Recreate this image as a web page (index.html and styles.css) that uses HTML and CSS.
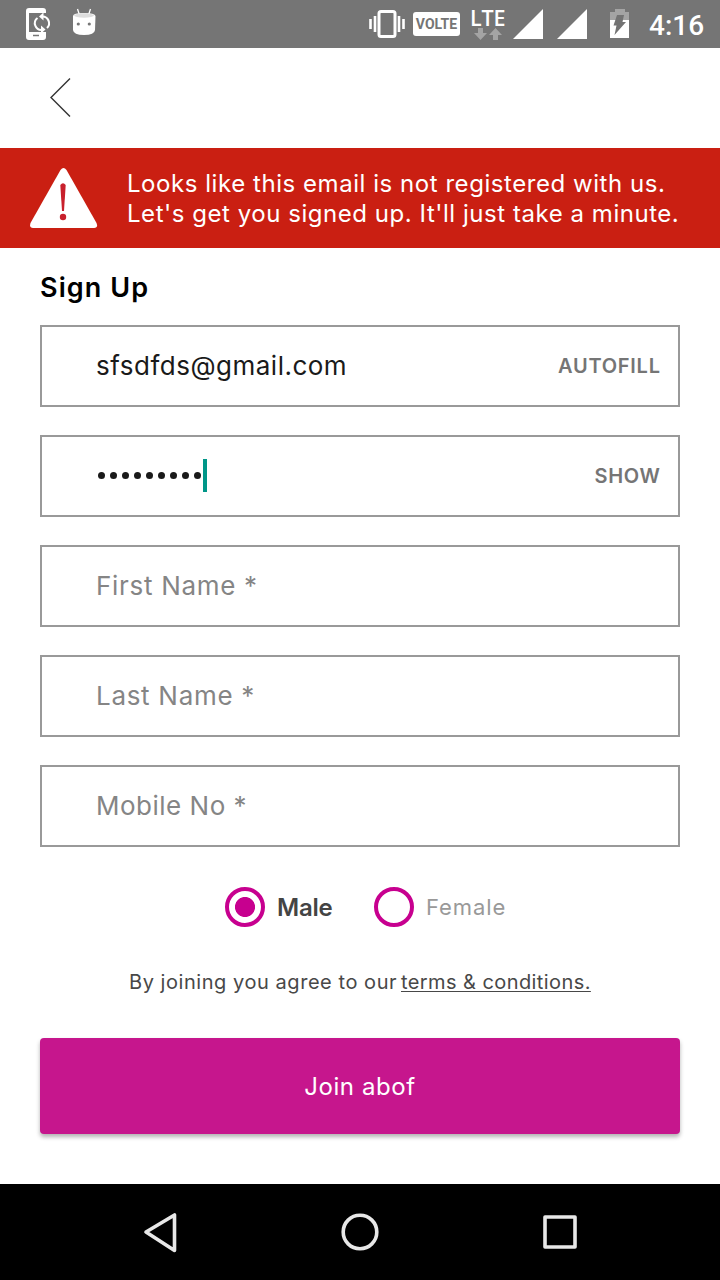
FILE: index.html
```html
<!DOCTYPE html>
<html lang="en">
<head>
<meta charset="utf-8">
<title>Sign Up</title>
<link rel="stylesheet" href="styles.css">
</head>
<body>
<div class="screen">
  <header class="status">
    <svg class="status-left" width="110" height="48" viewBox="0 0 110 48">
      <path d="M29 8h14q3 0 3 3v3h-3v-1H29v19h14v-1h3v6q0 3-3 3H29q-3 0-3-3V11q0-3 3-3z" fill="#fff"/>
      <path d="M29 13h18v19H29z" fill="#757575"/>
      <path d="M33 35.500h6" stroke="#777" stroke-width="1.500"/>
      <path d="M42 30A6.700 6.700 0 0 1 37.500 18M47 28A6.700 6.700 0 0 0 42 16.500" fill="none" stroke="#fff" stroke-width="2"/>
      <path d="M43.500 12.500v8l-4.500-4zM41 25.500v8l4.500-4z" fill="#fff"/>
      <path d="M77.500 9l2 6M90.500 9l-2 6" stroke="#fff" stroke-width="1.300"/>
      <path d="M73 16Q73 13 84 13T95.500 16L95 30Q94.500 35 84 35T73 30z" fill="#fff"/>
      <ellipse cx="84" cy="15.500" rx="10" ry="2.200" fill="#ddd"/>
      <circle cx="78.300" cy="24" r="1.600" fill="#777"/><circle cx="89.300" cy="24" r="1.600" fill="#777"/>
    </svg>
    <div class="status-right">
      <svg width="38" height="48" viewBox="368 0 38 48">
        <rect x="379" y="11.500" width="16" height="25" rx="2" fill="none" stroke="#fff" stroke-width="3"/>
        <path d="M370.500 19v10M403.500 19v10M375 16v16M399 16v16" stroke="#fff" stroke-width="2.600"/>
      </svg>
      <span class="volte">VOLTE</span>
      <div class="lte"><span class="lte-label">LTE</span>
        <svg width="30" height="12" viewBox="0 0 30 12"><path d="M5 0h5v5h4l-6.500 7L1 5h4zM20 12h5V7h4L22.500 0 16 7h4z" fill="#a4a4a4"/></svg>
      </div>
      <svg class="signals" width="122" height="48" viewBox="510 0 122 48">
        <path d="M513 39L543 9v30zM557 39L587 9v30z" fill="#fff"/>
        <path d="M610 12h5V9h10v3h4v8h-19z" fill="#a4a4a4"/>
        <path d="M610 20h19v18h-19z" fill="#fff"/>
        <path d="M617 15h7l-1.500 7h3.500L614.500 35l2-9.500h-3z" fill="#737373"/>
      </svg>
      <span class="clock">4:16</span>
    </div>
  </header>
  <nav class="toolbar">
    <svg width="24" height="42" viewBox="0 0 24 42"><path d="M22 1.500L3 20.500l19 19" fill="none" stroke="#333" stroke-width="1.400"/></svg>
  </nav>
  <section class="alert">
    <svg width="68" height="60" viewBox="0 0 68 60">
      <path d="M30.500 2Q33.500-2 36.500 2L66.500 55Q68.500 60 64 60H3Q-1 60 .5 55z" fill="#fff"/>
      <path d="M30.300 17Q33 13.500 35.700 17L34 43h-2z" fill="#c8202c"/><circle cx="33" cy="49" r="3.200" fill="#c8202c"/>
    </svg>
    <p class="alert-text"><span class="line-one">Looks like this email is not registered with us.</span><br><span class="line-two">Let's get you signed up. It'll just take a minute.</span></p>
  </section>
  <main class="form">
    <h1 class="title"><span>Sign Up</span></h1>
    <div class="fields">
      <div class="field"><span class="email">sfsdfds@gmail.com</span><span class="action autofill">AUTOFILL</span></div>
      <div class="field"><span class="password"><i></i><i></i><i></i><i></i><i></i><i></i><i></i><i></i><i></i></span><span class="caret"></span><span class="action show">SHOW</span></div>
      <div class="field"><span class="hint first">First Name *</span></div>
      <div class="field"><span class="hint last">Last Name *</span></div>
      <div class="field"><span class="hint mobile">Mobile No *</span></div>
    </div>
    <div class="genders">
      <span class="radio checked"></span><span class="male">Male</span>
      <span class="radio second"></span><span class="female">Female</span>
    </div>
    <p class="terms"><span class="agree">By joining you agree to our</span><a class="link">terms &amp; conditions.</a></p>
    <div class="join"><span>Join abof</span></div>
  </main>
  <footer class="navbar">
    <svg width="720" height="96" viewBox="0 0 720 96" fill="none" stroke="#e8e8e8" stroke-width="3.600" stroke-linejoin="round">
      <path d="M174.500 31v35.500L146 48z"/><circle cx="360" cy="48" r="16.800"/><rect x="545" y="33" width="30" height="30"/>
    </svg>
  </footer>
</div>
</body>
</html>
```
FILE: styles.css
```css
* { box-sizing: border-box; }
body { margin: 0; font-family: Inter, "Open Sans", sans-serif; }
svg { display: block; flex: none; }
span, a { white-space: nowrap; }
p, h1 { margin: 0; }
.screen { width: 720px; height: 1280px; display: flex; flex-direction: column; background: #fff; }
.status { height: 48px; background: #757575; display: flex; justify-content: space-between; color: #fff; flex: none; }
.status-right { width: 352px; display: flex; align-items: center; }
.volte { margin-left: 7px; width: 47px; height: 24px; border-radius: 3px; background: #fff; color: #757575; font: 700 14px/24px Roboto, sans-serif; text-align: center; }
.lte { margin-left: 10px; width: 36px; height: 32px; display: flex; flex-direction: column; }
.lte svg { margin: 1px 0 0 3px; }
.lte-label { font: 600 21.5px/20px "Open Sans", sans-serif; height: 19px; letter-spacing: -.2px; }
.signals { margin-left: 4px; }
.clock { margin-left: 17px; font: 500 28px/48px Roboto, sans-serif; padding-top: 3px; }
.toolbar { height: 100px; padding: 29px 0 0 48px; flex: none; }
.alert { height: 100px; background: #ca1f12; padding-left: 30px; display: flex; align-items: center; flex: none; }
.alert-text { margin-left: 29px; padding-top: 2px; color: #fff; font-size: 24px; line-height: 30px; font-weight: 400; }
.line-one { letter-spacing: .55px; }
.line-two { letter-spacing: .54px; }
.form { height: 936px; padding: 21px 40px 0; flex: none; }
.title { height: 56px; font-size: 27px; line-height: 38px; font-weight: 600; letter-spacing: 1.1px; color: #000; }
.fields { display: flex; flex-direction: column; gap: 28px; }
.field { height: 82px; border: 2px solid #999; padding: 0 18px 0 54px; display: flex; align-items: center; }
.email { font-size: 26px; color: #1a1a1a; font-weight: 400; padding-bottom: 2px; letter-spacing: .5px; }
.action { margin-left: auto; color: #757575; font-size: 20px; font-weight: 600; letter-spacing: .75px; margin-right: -.75px; }
.password { display: flex; gap: 4.7px; padding: 0 0 1px 2px; }
.password i { width: 7.3px; height: 7.3px; border-radius: 50%; background: #1a1a1a; }
.caret { width: 4px; height: 33px; background: #009688; margin-left: 1.6px; margin-bottom: 1px; }
.hint { font-size: 26px; color: #858585; font-weight: 400; padding-bottom: 2px; letter-spacing: .7px; }
.mobile { letter-spacing: .5px; }
.genders { margin-top: 40px; height: 40px; padding-left: 185px; display: flex; align-items: center; }
.radio { width: 40px; height: 40px; border: 4px solid #c7008f; border-radius: 50%; flex: none; }
.checked { background: radial-gradient(circle, #c7008f 9.6px, transparent 10.4px); }
.male { width: 97px; margin-left: 12px; font-size: 24px; color: #444; font-weight: 600; letter-spacing: -.2px; }
.female { margin-left: 12px; font-size: 22px; color: #999; font-weight: 400; letter-spacing: .9px; }
.terms { margin-top: 40px; height: 30px; padding-left: 89px; display: flex; font-size: 20px; line-height: 30px; color: #484848; }
.agree { width: 272px; letter-spacing: .55px; }
.link { letter-spacing: .42px; text-decoration: underline; text-decoration-thickness: 1px; text-underline-offset: 2px; }
.join { margin-top: 41px; height: 96px; border-radius: 4px; background: #c6168d; box-shadow: 0 3px 4px rgba(0,0,0,.3); color: #fff; text-align: center; font-size: 24px; line-height: 97px; font-weight: 400; letter-spacing: .6px; }
.navbar { height: 96px; background: #000; flex: none; }
```
